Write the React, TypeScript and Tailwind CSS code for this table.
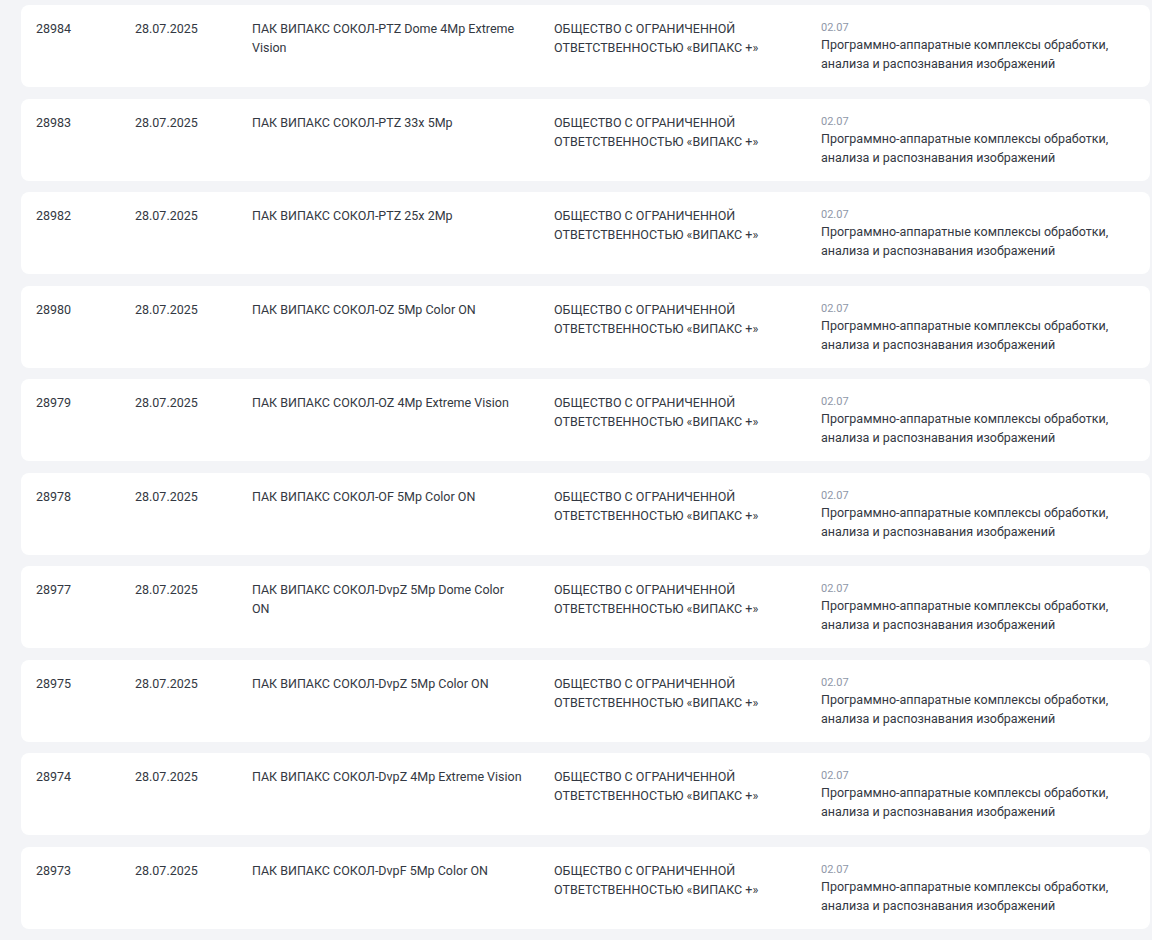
const rows = [
  { id: "28984", name: "ПАК ВИПАКС СОКОЛ-PTZ Dome 4Mp Extreme Vision" },
  { id: "28983", name: "ПАК ВИПАКС СОКОЛ-PTZ 33x 5Mp" },
  { id: "28982", name: "ПАК ВИПАКС СОКОЛ-PTZ 25x 2Mp" },
  { id: "28980", name: "ПАК ВИПАКС СОКОЛ-OZ 5Mp Color ON" },
  { id: "28979", name: "ПАК ВИПАКС СОКОЛ-OZ 4Mp Extreme Vision" },
  { id: "28978", name: "ПАК ВИПАКС СОКОЛ-OF 5Mp Color ON" },
  { id: "28977", name: "ПАК ВИПАКС СОКОЛ-DvpZ 5Mp Dome Color ON" },
  { id: "28975", name: "ПАК ВИПАКС СОКОЛ-DvpZ 5Mp Color ON" },
  { id: "28974", name: "ПАК ВИПАКС СОКОЛ-DvpZ 4Mp Extreme Vision" },
  { id: "28973", name: "ПАК ВИПАКС СОКОЛ-DvpF 5Mp Color ON" },
];

export default function App() {
  return (
    <div
      className="min-h-[940px] w-[1152px] overflow-hidden bg-[#f3f4f7] pl-[21px] pt-[5px] text-[12.5px] leading-[19px] text-[#333842]"
      style={{ fontFamily: 'Roboto, "Noto Sans", sans-serif' }}
    >
      <div className="flex w-[1129px] flex-col gap-[11.5px]">
        {rows.map((r) => (
          <div key={r.id} className="flex h-[82px] rounded-[8px] bg-white pt-[14px]">
            <div className="w-[114px] shrink-0 pl-[15px]">{r.id}</div>
            <div className="w-[117px] shrink-0">28.07.2025</div>
            <div className="w-[302px] shrink-0 pr-[30px]">{r.name}</div>
            <div className="w-[267px] shrink-0 pr-[52px]">
              ОБЩЕСТВО С ОГРАНИЧЕННОЙ ОТВЕТСТВЕННОСТЬЮ «ВИПАКС +»
            </div>
            <div className="w-[300px] shrink-0">
              <div className="pt-[1px] text-[11px] leading-[15px] text-[#8f97a8]">02.07</div>
              <div>Программно-аппаратные комплексы обработки, анализа и распознавания изображений</div>
            </div>
          </div>
        ))}
      </div>
    </div>
  );
}
